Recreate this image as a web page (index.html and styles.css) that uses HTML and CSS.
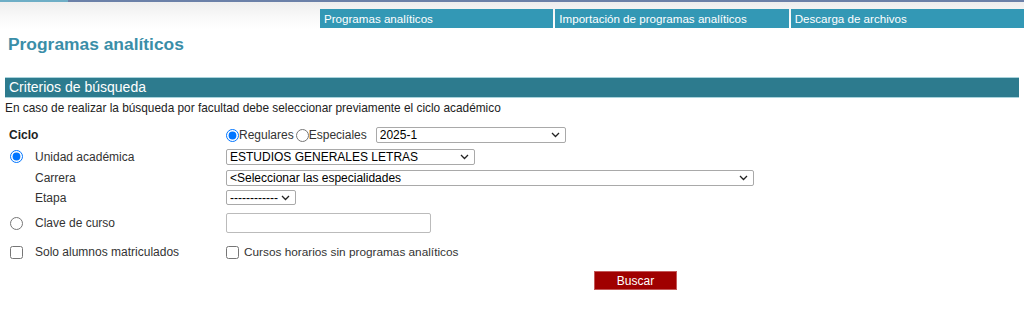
FILE: index.html
```html
<!DOCTYPE html>
<html lang="es">
<head>
  <meta charset="UTF-8" />
  <title>Programas analíticos</title>
  <link rel="stylesheet" href="styles.css">
</head>
<body>

<div class="top-line"><span class="top-line-accent"></span></div>

<header class="top-bar">
  <nav class="tabs">
    <a class="tab">Programas analíticos</a>
    <a class="tab">Importación de programas analíticos</a>
    <a class="tab">Descarga de archivos</a>
  </nav>
</header>

<h1 class="page-title">Programas analíticos</h1>

<div class="section-head">Criterios de búsqueda</div>
<p class="hint">En caso de realizar la búsqueda por facultad debe seleccionar previamente el ciclo académico</p>

<form class="criteria">
  <div class="row row-ciclo">
    <div class="label"><b>Ciclo</b></div>
    <div class="field">
      <label class="inline"><input type="radio" name="tipo" checked>Regulares</label>
      <label class="inline"><input type="radio" name="tipo">Especiales</label>
      <select class="sel sel-ciclo"><option>2025-1</option></select>
    </div>
  </div>

  <div class="row row-unidad">
    <div class="label"><input type="radio" name="modo" class="lead" checked><span>Unidad académica</span></div>
    <div class="field"><select class="sel sel-unidad"><option>ESTUDIOS GENERALES LETRAS</option></select></div>
  </div>

  <div class="row row-carrera">
    <div class="label"><span class="indent">Carrera</span></div>
    <div class="field"><select class="sel sel-carrera"><option>&lt;Seleccionar las especialidades</option></select></div>
  </div>

  <div class="row row-etapa">
    <div class="label"><span class="indent">Etapa</span></div>
    <div class="field"><select class="sel sel-etapa"><option>------------</option></select></div>
  </div>

  <div class="row row-clave">
    <div class="label"><input type="radio" name="modo" class="lead"><span>Clave de curso</span></div>
    <div class="field"><input type="text" class="txt"></div>
  </div>

  <div class="row row-solo">
    <div class="label"><input type="checkbox" class="lead"><span>Solo alumnos matriculados</span></div>
    <div class="field"><label class="inline small"><input type="checkbox" class="chk">Cursos horarios sin programas analíticos</label></div>
  </div>

  <div class="actions">
    <button type="button" class="btn">Buscar</button>
  </div>
</form>

</body>
</html>
```

FILE: styles.css
```css
* { box-sizing: border-box; }
body {
  margin: 0;
  font-family: "Liberation Sans", Arial, sans-serif;
  font-size: 12px;
  color: #333;
  background: #fff;
}
.top-line {
  height: 2px;
  background: #6b80a8;
  display: flex;
}
.top-line-accent {
  width: 68px;
  background: #6eaec6;
}
.top-bar {
  height: 28px;
  padding-top: 7px;
  background: linear-gradient(#eeeeee, #fafafa 60%, #fff);
  display: flex;
  justify-content: flex-end;
}
.tabs {
  display: flex;
  gap: 2px;
  width: 704px;
}
.tab {
  flex: 1;
  height: 19px;
  line-height: 19px;
  padding-left: 4px;
  background: #3398b5;
  color: #fff;
  font-size: 11.6px;
  text-decoration: none;
}
.page-title {
  margin: 3px 0 0 8px;
  font-size: 17.4px;
  font-weight: bold;
  color: #3a8ea8;
  line-height: 22px;
}
.section-head {
  margin: 22px 5px 0 5px;
  height: 21px;
  line-height: 19px;
  padding-left: 4px;
  background: #2d7b8e;
  border-top: 1px solid #a9d3dc;
  border-bottom: 1px solid #a9d3dc;
  color: #fff;
  font-size: 14px;
}
.hint {
  margin: 2px 0 0 5px;
  color: #222;
  font-size: 11.85px;
  line-height: 16px;
}
.criteria {
  margin-top: 8px;
}
.row {
  display: flex;
  align-items: center;
}
.row-ciclo { height: 22px; }
.row-unidad { height: 21px; }
.row-carrera { height: 21px; }
.row-etapa { height: 19px; }
.row-clave { height: 30px; padding-top: 2px; }
.row-solo { height: 30px; }
.label {
  width: 226px;
  display: flex;
  align-items: center;
  padding-left: 9px;
}
.label b { color: #222; font-size: 12px; }
.lead {
  margin: 0 12px 0 1px;
  width: 13px;
  height: 13px;
}
.indent { padding-left: 26px; }
.field {
  display: flex;
  align-items: center;
}
.inline {
  display: inline-flex;
  align-items: center;
}
.small { font-size: 11.8px; }
.inline input[type=radio] {
  margin: 0;
  width: 13px;
  height: 13px;
}
.inline + .inline { margin-left: 2px; }
.sel {
  appearance: none;
  -webkit-appearance: none;
  height: 16px;
  font-family: "Liberation Sans", Arial, sans-serif;
  font-size: 12px;
  line-height: 14px;
  color: #000;
  border: 1px solid #a9a9a9;
  border-radius: 2px;
  background: #fff url("data:image/svg+xml,%3Csvg xmlns='http://www.w3.org/2000/svg' width='9' height='6' viewBox='0 0 9 6'%3E%3Cpath d='M1 1l3.5 3.5L8 1' fill='none' stroke='%23222' stroke-width='1.3'/%3E%3C/svg%3E") no-repeat right 5px center;
  padding: 0 18px 0 3px;
}
.sel-ciclo { width: 190px; margin-left: 9px; }
.sel-unidad { width: 249px; }
.sel-carrera { width: 528px; }
.sel-etapa { width: 70px; height: 15px; padding-right: 14px; }
.txt {
  width: 205px;
  height: 20px;
  border: 1px solid #bbb;
  border-radius: 2px;
}
.chk {
  margin: 0 5px 0 0;
  width: 13px;
  height: 13px;
}
.actions {
  padding: 4px 0 0 594px;
}
.btn {
  width: 83px;
  height: 19px;
  background: #a00000;
  color: #fff;
  border: 1px solid #c45858;
  font-family: "Liberation Sans", Arial, sans-serif;
  font-size: 12px;
  padding: 0;
  cursor: pointer;
}
```
